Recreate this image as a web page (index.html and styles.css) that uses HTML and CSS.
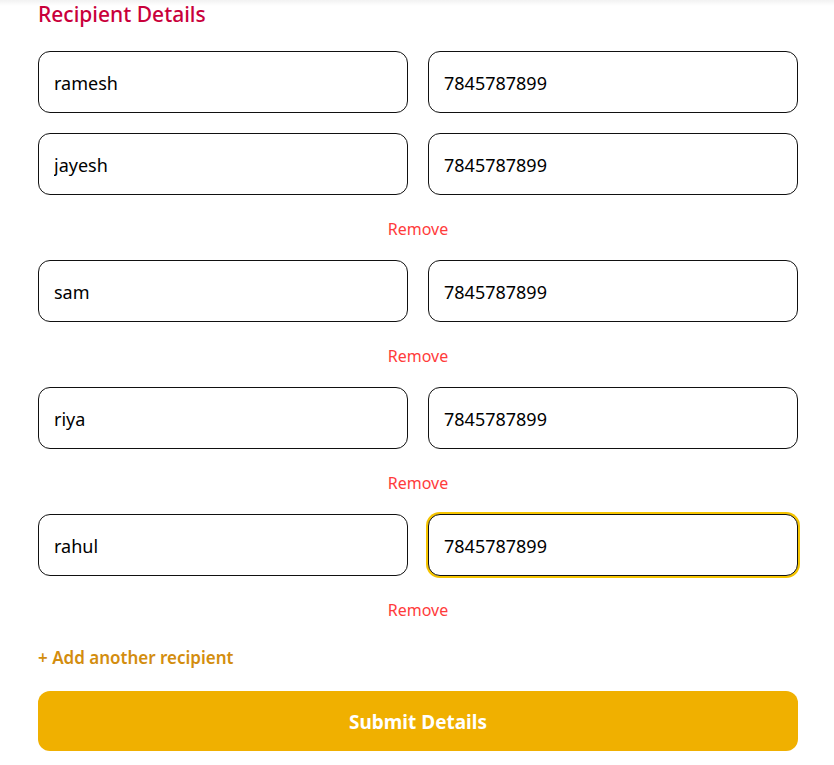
FILE: index.html
```html
<!DOCTYPE html>
<html>
<head>
<meta charset="utf-8">
<link rel="stylesheet" href="styles.css">
</head>
<body>
<div class="topshade"></div>
<main class="form">
  <h2 class="title">Recipient Details</h2>
  <div class="recipient first">
    <div class="row">
      <input class="field" type="text" value="ramesh">
      <input class="field" type="text" value="7845787899">
    </div>
  </div>
  <div class="recipient">
    <div class="row">
      <input class="field" type="text" value="jayesh">
      <input class="field" type="text" value="7845787899">
    </div>
    <button class="remove" type="button">Remove</button>
  </div>
  <div class="recipient">
    <div class="row">
      <input class="field" type="text" value="sam">
      <input class="field" type="text" value="7845787899">
    </div>
    <button class="remove" type="button">Remove</button>
  </div>
  <div class="recipient">
    <div class="row">
      <input class="field" type="text" value="riya">
      <input class="field" type="text" value="7845787899">
    </div>
    <button class="remove" type="button">Remove</button>
  </div>
  <div class="recipient">
    <div class="row">
      <input class="field" type="text" value="rahul">
      <input class="field focused" type="text" value="7845787899">
    </div>
    <button class="remove" type="button">Remove</button>
  </div>
  <button class="add" type="button">+ Add another recipient</button>
  <button class="submit" type="button">Submit Details</button>
</main>
</body>
</html>
```
FILE: styles.css
```css
* { box-sizing: border-box; }
html, body { margin: 0; padding: 0; background: #fff; }
body {
  font-family: "Noto Sans", "Open Sans", sans-serif;
  width: 834px;
  height: 765px;
  overflow: hidden;
  position: relative;
}
.topshade {
  position: absolute;
  left: 0; right: 0; top: 0;
  height: 6px;
  background: linear-gradient(to bottom, rgba(0,0,0,0.05), rgba(0,0,0,0));
}
.form {
  padding: 0 36px 0 38px;
  display: flex;
  flex-direction: column;
}
.title {
  margin: 0;
  font-size: 21px;
  font-weight: 500;
  color: #c9003b;
  line-height: 28px;
  height: 51px;
}
.recipient { display: flex; flex-direction: column; }
.recipient.first { margin-bottom: 20px; }
.row {
  display: grid;
  grid-template-columns: 370px 370px;
  column-gap: 20px;
}
.field {
  height: 62px;
  border: 1px solid #111;
  border-radius: 12px;
  padding: 2px 15px 0;
  font-family: inherit;
  font-size: 18px;
  color: #000;
  background: #fff;
  outline: none;
}
.field.focused {
  box-shadow: 0 0 0 2px #f5c400;
}
.remove {
  align-self: center;
  background: none;
  border: none;
  padding: 4px 0 0;
  margin: 0;
  font-family: inherit;
  font-size: 16px;
  color: #ff3b3b;
  height: 65px;
  line-height: 61px;
  cursor: pointer;
}
.add {
  align-self: flex-start;
  background: none;
  border: none;
  padding: 0 0 16px;
  font-family: inherit;
  font-size: 17px;
  font-weight: 600;
  color: #d38d0e;
  height: 50px;
  line-height: 34px;
  cursor: pointer;
}
.submit {
  width: 760px;
  height: 60px;
  border: none;
  border-radius: 12px;
  background: #f0b000;
  color: #fff;
  padding-top: 2px;
  font-family: inherit;
  font-size: 19px;
  font-weight: 700;
  cursor: pointer;
}
```
